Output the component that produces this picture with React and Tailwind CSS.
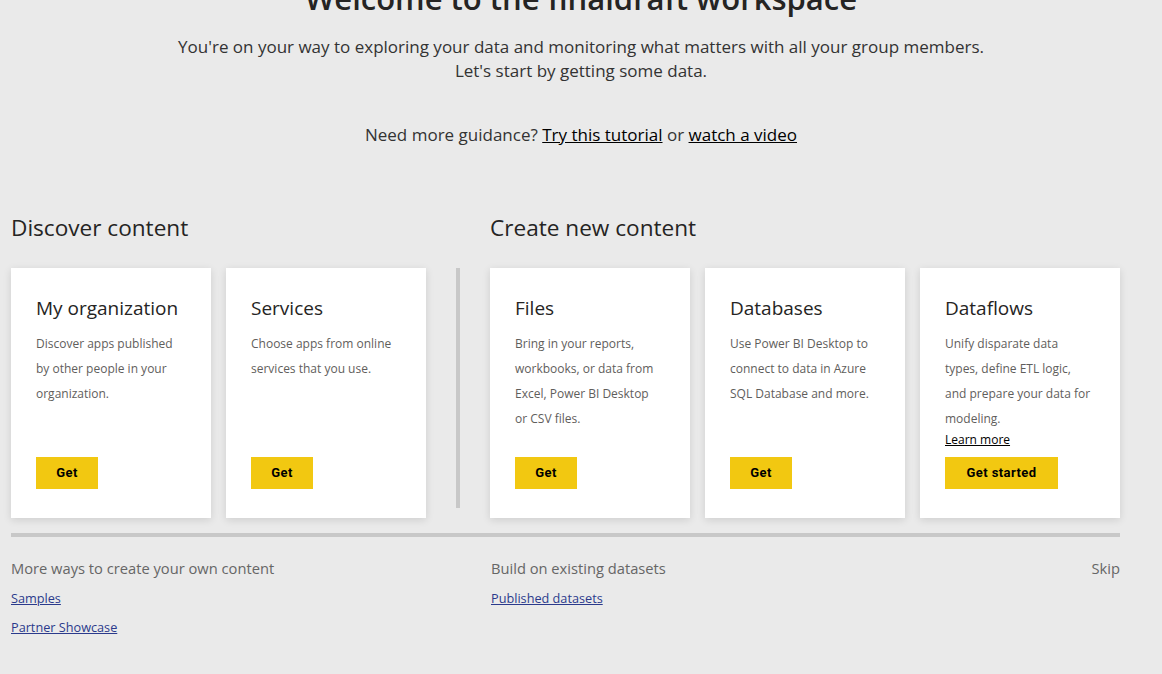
const discover = [
  {
    title: 'My organization',
    text: 'Discover apps published by other people in your organization.',
    button: 'Get',
  },
  {
    title: 'Services',
    text: 'Choose apps from online services that you use.',
    button: 'Get',
  },
]

const create = [
  {
    title: 'Files',
    text: 'Bring in your reports, workbooks, or data from Excel, Power BI Desktop or CSV files.',
    button: 'Get',
  },
  {
    title: 'Databases',
    text: 'Use Power BI Desktop to connect to data in Azure SQL Database and more.',
    button: 'Get',
  },
  {
    title: 'Dataflows',
    text: 'Unify disparate data types, define ETL logic, and prepare your data for modeling.',
    button: 'Get started',
    learn: true,
  },
]

function Card({ title, text, button, learn }) {
  return (
    <div className="w-[200px] h-[250px] bg-white shadow-[0_2px_8px_rgba(0,0,0,0.12)] pl-[25px] pr-[27px] pt-[27px] pb-[29px] flex flex-col">
      <h3 className="text-[19px] leading-[26px] text-[#252423]">{title}</h3>
      <p className="mt-[10px] text-[12px] leading-[25px] text-[#5f5e5c]">{text}</p>
      {learn && (
        <a href="#" className="mt-[1px] text-[12px] leading-[15px] text-black underline">Learn more</a>
      )}
      <div className="mt-auto">
        <button
          className={
            (learn ? 'w-[113px] ' : 'w-[62px] ') +
            "h-[32px] bg-[#f2c811] text-[13px] font-bold text-black font-['Roboto',sans-serif] tracking-[0.4px]"
          }
        >
          {button}
        </button>
      </div>
    </div>
  )
}

export default function App() {
  return (
    <div className="h-[674px] overflow-hidden bg-[#eaeaea] font-['Open_Sans',sans-serif] text-[#333]">
      <div className="text-center">
        <h1 className="-mt-[22px] text-[31px] leading-[40px] font-semibold text-[#252423]">
          Welcome to the finaldraft workspace
        </h1>
        <p className="mt-[17px] text-[17px] leading-[24px] text-[#333]">
          You're on your way to exploring your data and monitoring what matters with all your group members.
          <br />
          Let's start by getting some data.
        </p>
        <p className="mt-[40px] text-[17px] leading-[24px] text-[#333]">
          Need more guidance? <a href="#" className="underline text-black">Try this tutorial</a> or{' '}
          <a href="#" className="underline text-black">watch a video</a>
        </p>
      </div>

      <div className="mt-[66px] px-[11px] w-[1131px]">
        <div className="flex">
          <section>
            <h2 className="text-[22.6px] leading-[30px] text-[#252423]">Discover content</h2>
            <div className="mt-[25px] flex gap-[15px]">
              {discover.map((c) => (
                <Card key={c.title} {...c} />
              ))}
            </div>
          </section>
          <div className="mx-[30px] mt-[55px] w-[4px] h-[240px] bg-[#c8c8c8]" />
          <section>
            <h2 className="text-[22.6px] leading-[30px] text-[#252423]">Create new content</h2>
            <div className="mt-[25px] flex gap-[15px]">
              {create.map((c) => (
                <Card key={c.title} {...c} />
              ))}
            </div>
          </section>
        </div>

        <div className="mt-[15px] h-[4px] w-[1109px] bg-[#c8c8c8]" />

        <div className="mt-[21px] flex w-[1109px] text-[14.7px] leading-[20px] text-[#666]">
          <div className="w-[480px]">
            <p>More ways to create your own content</p>
            <a href="#" className="block mt-[11px] text-[12.7px] leading-[18px] text-[#2b3a8c] underline">Samples</a>
            <a href="#" className="block mt-[11px] text-[12.7px] leading-[18px] text-[#2b3a8c] underline">Partner Showcase</a>
          </div>
          <div className="flex-1">
            <p>Build on existing datasets</p>
            <a href="#" className="block mt-[11px] text-[12.7px] leading-[18px] text-[#2b3a8c] underline">Published datasets</a>
          </div>
          <a href="#" className="text-[#666]">Skip</a>
        </div>
      </div>
    </div>
  )
}
